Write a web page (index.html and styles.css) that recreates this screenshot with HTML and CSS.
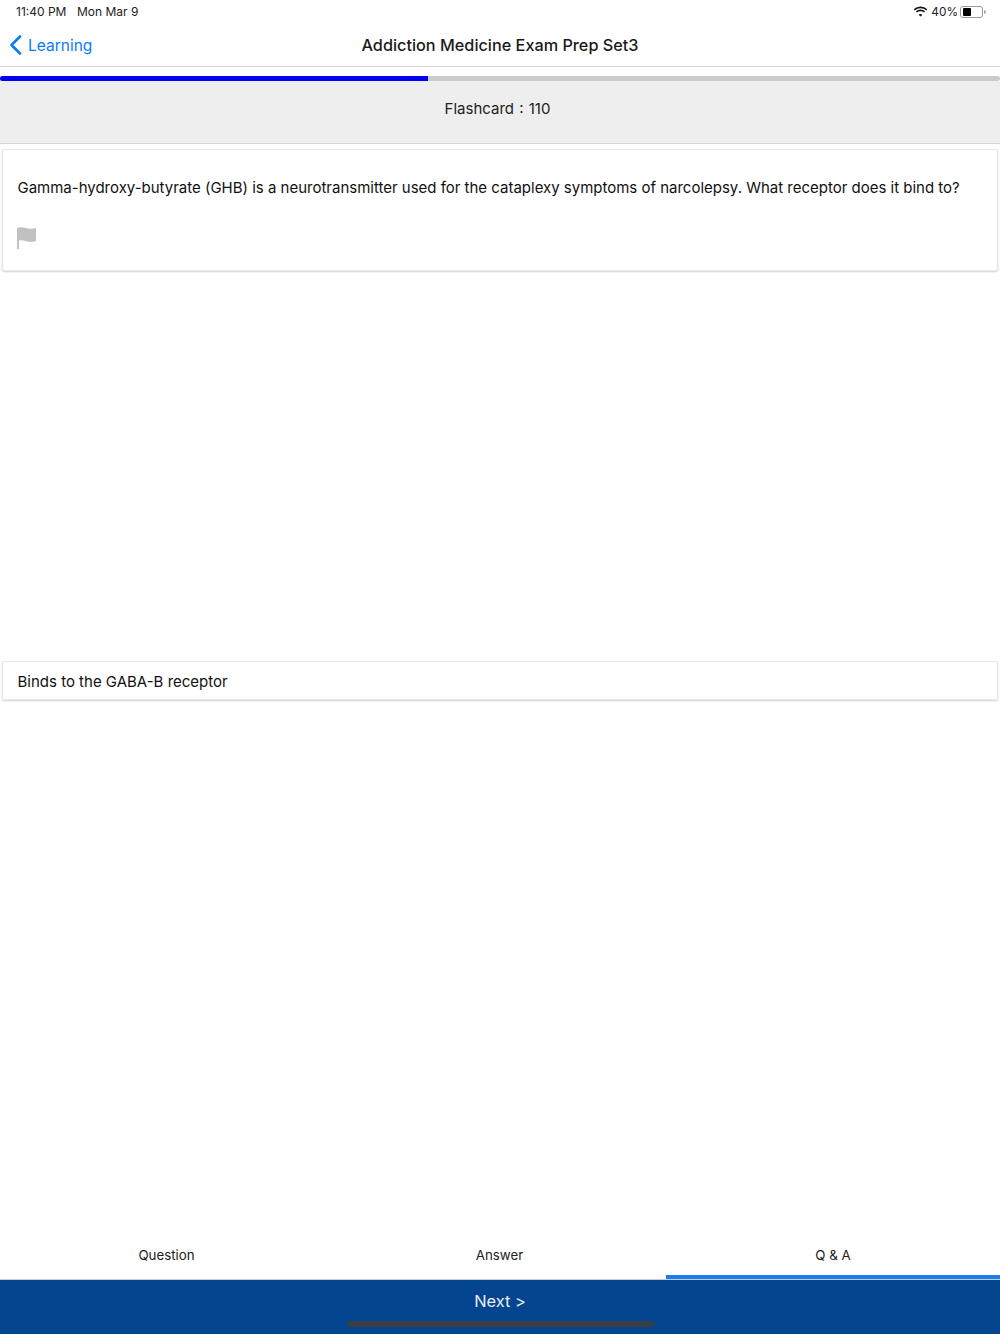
FILE: index.html
```html
<!DOCTYPE html>
<html lang="en">
<head>
<meta charset="utf-8">
<title>Addiction Medicine Exam Prep Set3</title>
<link rel="stylesheet" href="styles.css">
</head>
<body>
<div class="page">
  <div class="status">
    <div class="status-time"><span>11:40 PM</span><span>Mon Mar 9</span></div>
    <div class="status-right">
      <svg class="wifi" width="15" height="11" viewBox="0 0 15 11"><path d="M7.5 2.2c2.2 0 4.2.8 5.700 2.200l1.100-1.200A9.900 9.900 0 0 0 7.500.5 9.900 9.900 0 0 0 .7 3.200l1.100 1.200a8.300 8.300 0 0 1 5.700-2.200z M7.500 5.200c1.300 0 2.500.5 3.500 1.300l1.100-1.200a6.800 6.800 0 0 0-9.200 0L4 6.500c1-.8 2.200-1.300 3.500-1.300z M7.500 8c-.7 0-1.300.2-1.800.7l1.800 1.900 1.800-1.900C8.800 8.200 8.200 8 7.500 8z" fill="#111"/></svg>
      <span class="pct">40%</span>
      <span class="battery"><span class="battery-fill"></span></span>
      <span class="battery-cap"></span>
    </div>
  </div>
  <header class="nav">
    <a class="back">
      <svg width="13" height="20" viewBox="0 0 13 20"><path d="M11 1.500 2.500 10l8.500 8.500" fill="none" stroke="#0a7aff" stroke-width="2.600" stroke-linecap="round" stroke-linejoin="round"/></svg>
      <span>Learning</span>
    </a>
    <h1 class="nav-title">Addiction Medicine Exam Prep Set3</h1>
  </header>
  <div class="progress"><div class="progress-fill"></div></div>
  <div class="band">Flashcard : 110</div>
  <main class="content">
    <section class="card question">
      <p>Gamma-hydroxy-butyrate (GHB) is a neurotransmitter used for the cataplexy symptoms of narcolepsy. What receptor does it bind to?</p>
      <svg class="flag" width="19" height="22" viewBox="0 0 19 22"><path d="M0 1C3-.5 6 .3 9 1s6 1 10 0v13c-4 1.300-7 1-10 .2s-5-1.200-7-.4V22H0z" fill="#c1c1c1"/></svg>
    </section>
    <section class="card answer">Binds to the GABA-B receptor</section>
  </main>
  <nav class="tabs">
    <div class="tab">Question</div>
    <div class="tab">Answer</div>
    <div class="tab active">Q &amp; A</div>
  </nav>
  <footer class="next">
    <span>Next &gt;</span>
    <div class="home"></div>
  </footer>
</div>
</body>
</html>
```
FILE: styles.css
```css
* { box-sizing: border-box; }
html, body { margin: 0; padding: 0; background: #fff; }
body { font-family: Inter, "Liberation Sans", sans-serif; color: #111; }
.page { width: 1000px; height: 1334px; display: flex; flex-direction: column; overflow: hidden; }

.status { height: 24px; flex: none; display: flex; justify-content: space-between; align-items: center; padding: 0 14px 1px 16px; font-size: 12px; color: #222; }
.status-time { display: flex; gap: 10.500px; }
.status-right { display: flex; align-items: center; }
.wifi { margin-right: 3px; }
.pct { margin-right: 2px; font-size: 11.800px; }
.battery { width: 23px; height: 12px; border: 1px solid #999; border-radius: 3px; padding: 1px 2px; display: block; }
.battery-fill { display: block; width: 8px; height: 100%; background: #000; border-radius: 1px; }
.battery-cap { width: 2px; height: 4px; margin-left: 1px; background: #aaa; border-radius: 0 2px 2px 0; }

.nav { height: 43px; flex: none; border-bottom: 1px solid #d6d6d6; display: flex; align-items: center; justify-content: center; position: relative; }
.back { position: absolute; left: 9px; top: 11px; display: flex; align-items: center; gap: 6px; color: #0a7aff; font-size: 15.500px; }
.nav-title { margin: 0; font-size: 16.250px; font-weight: 500; color: #1a1a1a; }

.progress { height: 5px; margin-top: 9px; flex: none; background: #cbcbcb; border-radius: 3px; overflow: hidden; }
.progress-fill { width: 428px; height: 100%; background: #0000ee; }

.band { height: 63px; flex: none; background: #eee; border-bottom: 1px solid #d4d4d4; display: flex; align-items: center; justify-content: center; padding: 0 5px 7px 0; font-size: 15px; word-spacing: 1px; color: #222; }

.content { flex: 1; padding: 5px 2px 0; display: flex; flex-direction: column; gap: 390px; }
.card { background: #fff; border: 1px solid #e9e9e9; border-radius: 2px; box-shadow: 0 1px 2px rgba(0,0,0,.18); font-size: 15px; line-height: 20px; color: #111; }
.question { height: 122px; padding: 28px 14.500px 0; }
.question p { margin: 0; white-space: nowrap; letter-spacing: -0.008px; }
.flag { display: block; margin: 29px 0 0 -0.500px; }
.answer { height: 39px; padding: 9.500px 14.500px; }

.tabs { height: 50px; flex: none; display: grid; grid-template-columns: 1fr 1fr 334px; font-size: 13.300px; color: #222; }
.tab { display: flex; align-items: center; justify-content: center; padding-top: 6px; border-bottom: 4px solid transparent; }
.tab.active { border-bottom-color: #1a7df0; }

.next { height: 55px; flex: none; background: #04458f; border-top: 1px solid #c9ced6; color: #e9eef6; font-size: 16.400px; display: flex; flex-direction: column; align-items: center; padding-top: 11px; position: relative; }
.home { position: absolute; left: 347px; bottom: 7px; width: 307px; height: 6px; background: #3a3d44; border-radius: 3px; }
```
